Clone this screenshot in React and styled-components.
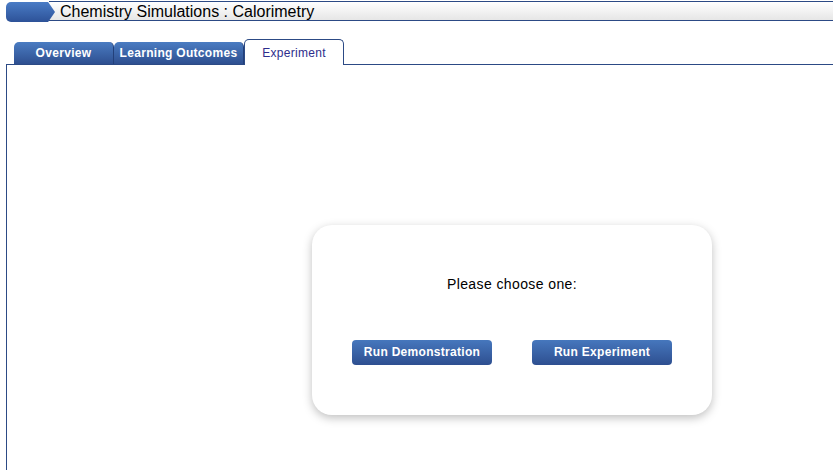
import React from "react";
import styled, { createGlobalStyle } from "styled-components";

const Global = createGlobalStyle`
    html, body {
        margin: 0;
        padding: 0;
        background: #ffffff;
        overflow: hidden;
        font-family: "Liberation Sans", Arial, sans-serif;
    }
`;

const Page = styled.div`
    width: 833px;
    height: 470px;
    overflow: hidden;
`;

const TitleBar = styled.div`
    display: flex;
    align-items: stretch;
    height: 20px;
    margin-top: 1px;
`;

const Arrow = styled.div`
    width: 49px;
    margin-left: 6px;
    background: linear-gradient(#4a7cc6, #2d5298);
    border-radius: 5px 0 0 5px;
    clip-path: polygon(0 0, 86% 0, 100% 50%, 86% 100%, 0 100%);
    margin-top: 1px;
    margin-bottom: -1px;
`;

const TitleText = styled.div`
    flex: 1;
    margin-left: -6px;
    padding-left: 11px;
    border-top: 1px solid #2c4a85;
    border-bottom: 1px solid #2c4a85;
    background: linear-gradient(#ffffff, #e6e6e6);
    font-size: 16px;
    line-height: 20px;
    color: #000;
`;

const TabRow = styled.div`
    display: flex;
    align-items: flex-end;
    margin-top: 17px;
    padding-left: 14px;
    height: 26px;
`;

const Tab = styled.div`
    width: ${p => p.$w}px;
    height: 22px;
    box-sizing: border-box;
    display: flex;
    align-items: center;
    justify-content: center;
    font-size: 12px;
    letter-spacing: 0.3px;
    border-radius: 5px 5px 0 0;
    ${p => p.$active
        ? `
        background: #fff;
        border: 1px solid #2c4a85;
        border-bottom: none;
        color: #2d2d8c;
        margin-bottom: -1px;
        height: 26px;
        padding-top: 1px;
        position: relative;
        z-index: 1;
    `
        : `
        background: linear-gradient(#4a7cc2, #2e4f90);
        color: #fff;
        font-weight: bold;
        border-right: 1px solid #23407a;
    `}
`;

const Panel = styled.div`
    margin-left: 6px;
    width: 1010px;
    height: 510px;
    border-top: 1px solid #2c4a85;
    border-left: 1px solid #2c4a85;
    display: flex;
    align-items: center;
    justify-content: center;
`;

const Card = styled.div`
    width: 400px;
    height: 190px;
    box-sizing: border-box;
    background: #fff;
    border-radius: 20px;
    box-shadow: 0 3px 10px rgba(0, 0, 0, 0.25);
    padding: 50px 40px 0;
    display: flex;
    flex-direction: column;
    align-items: center;
`;

const Prompt = styled.div`
    font-size: 14px;
    letter-spacing: 0.4px;
    color: #000;
    line-height: 18px;
`;

const Buttons = styled.div`
    display: flex;
    gap: 40px;
    margin-top: 47px;
`;

const Button = styled.button`
    width: 140px;
    height: 25px;
    border: none;
    border-radius: 4px;
    background: linear-gradient(#4677bd, #2e4f90);
    color: #fff;
    font-family: "Liberation Sans", Arial, sans-serif;
    font-weight: bold;
    font-size: 12px;
    letter-spacing: 0.3px;
    line-height: 23px;
    padding: 0;
    cursor: pointer;
`;

export default function App() {
    return (
        <Page>
            <Global />
            <TitleBar>
                <Arrow />
                <TitleText>Chemistry Simulations : Calorimetry</TitleText>
            </TitleBar>
            <TabRow>
                <Tab $w={100}>Overview</Tab>
                <Tab $w={130}>Learning Outcomes</Tab>
                <Tab $w={100} $active>Experiment</Tab>
            </TabRow>
            <Panel>
                <Card>
                    <Prompt>Please choose one:</Prompt>
                    <Buttons>
                        <Button>Run Demonstration</Button>
                        <Button>Run Experiment</Button>
                    </Buttons>
                </Card>
            </Panel>
        </Page>
    );
}
